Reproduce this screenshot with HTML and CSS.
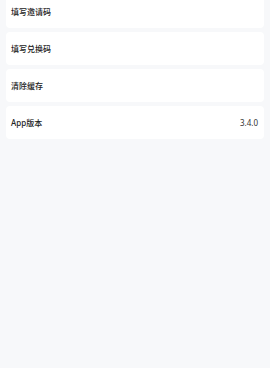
FILE: index.html
```html
<!DOCTYPE html>
<html lang="zh-CN">
<head>
    <meta charset="UTF-8">
    <meta name="viewport" content="width=device-width, initial-scale=1.0">
    <title>设置</title>
    <link rel="stylesheet" href="styles.css">
</head>
<body>
    <div class="settings">
        <div class="item">
            <span class="label">填写邀请码</span>
        </div>
        <div class="item">
            <span class="label">填写兑换码</span>
        </div>
        <div class="item">
            <span class="label">清除缓存</span>
        </div>
        <div class="item">
            <span class="label">App版本</span>
            <span class="value">3.4.0</span>
        </div>
    </div>
</body>
</html>
```

FILE: styles.css
```css
html, body {
    margin: 0;
    padding: 0;
    background: #f7f8fa;
}

body {
    font-family: "Noto Sans", "Noto Sans CJK SC", sans-serif;
    color: #222;
    font-size: 8px;
    height: 368px;
    overflow: hidden;
}

.settings {
    display: flex;
    flex-direction: column;
    gap: 4px;
    padding: 0 6px 0 5.5px;
    margin-top: -5px;
}

.item {
    height: 33px;
    background: #fff;
    border-radius: 4px;
    display: flex;
    align-items: center;
    justify-content: space-between;
    padding: 0 6px 0 5.5px;
}

.label {
    font-weight: 500;
}

.value {
    color: #333;
}
```
